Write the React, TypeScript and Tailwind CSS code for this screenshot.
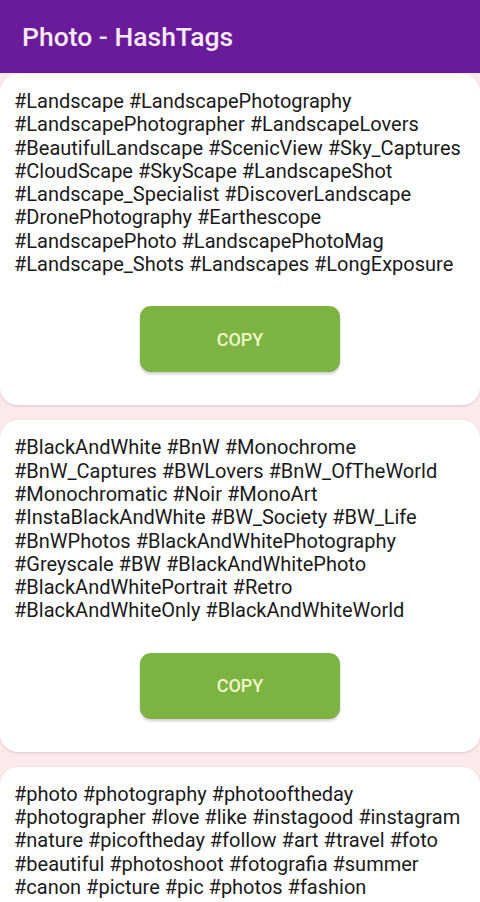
import React from "react";

const groups = [
  [
    "#Landscape #LandscapePhotography",
    "#LandscapePhotographer #LandscapeLovers",
    "#BeautifulLandscape #ScenicView #Sky_Captures",
    "#CloudScape #SkyScape #LandscapeShot",
    "#Landscape_Specialist #DiscoverLandscape",
    "#DronePhotography #Earthescope",
    "#LandscapePhoto #LandscapePhotoMag",
    "#Landscape_Shots #Landscapes #LongExposure",
  ],
  [
    "#BlackAndWhite #BnW #Monochrome",
    "#BnW_Captures #BWLovers #BnW_OfTheWorld",
    "#Monochromatic #Noir #MonoArt",
    "#InstaBlackAndWhite #BW_Society #BW_Life",
    "#BnWPhotos #BlackAndWhitePhotography",
    "#Greyscale #BW #BlackAndWhitePhoto",
    "#BlackAndWhitePortrait #Retro",
    "#BlackAndWhiteOnly #BlackAndWhiteWorld",
  ],
  [
    "#photo #photography #photooftheday",
    "#photographer #love #like #instagood #instagram",
    "#nature #picoftheday #follow #art #travel #foto",
    "#beautiful #photoshoot #fotografia #summer",
    "#canon #picture #pic #photos #fashion",
  ],
];

export default function App() {
  return (
    <div
      className="w-[480px] h-[902px] overflow-hidden bg-[#fbe9ee] flex flex-col"
      style={{ fontFamily: "Roboto, 'Noto Sans', sans-serif" }}
    >
      <div className="h-[73px] shrink-0 bg-[#6a1b9a] flex items-center pl-[22px] pt-[1px]">
        <span className="text-[#fbeaf7] text-[26.5px] font-medium">
          Photo - HashTags
        </span>
      </div>
      <div className="flex flex-col gap-[15px] pt-[1px]">
        {groups.map((g, i) => (
          <div
            key={i}
            className="bg-white rounded-[18px] shadow-[0_1px_3px_rgba(0,0,0,0.15)] pt-[16px] pb-[33px] flex flex-col"
          >
            <div className="px-[14px] text-[20px] leading-[23.3px] text-[#1a1a1a]">
              {g.map((l, j) => (
                <div key={j} className="whitespace-nowrap">{l}</div>
              ))}
            </div>
            {i < 2 && (
              <div className="flex justify-center mt-[30px]">
                <button className="w-[200px] h-[66px] rounded-[11px] bg-[#7cb342] text-[#eef9c8] text-[18px] font-medium shadow-[0_2px_3px_rgba(0,0,0,0.2)]">
                  COPY
                </button>
              </div>
            )}
          </div>
        ))}
      </div>
    </div>
  );
}
